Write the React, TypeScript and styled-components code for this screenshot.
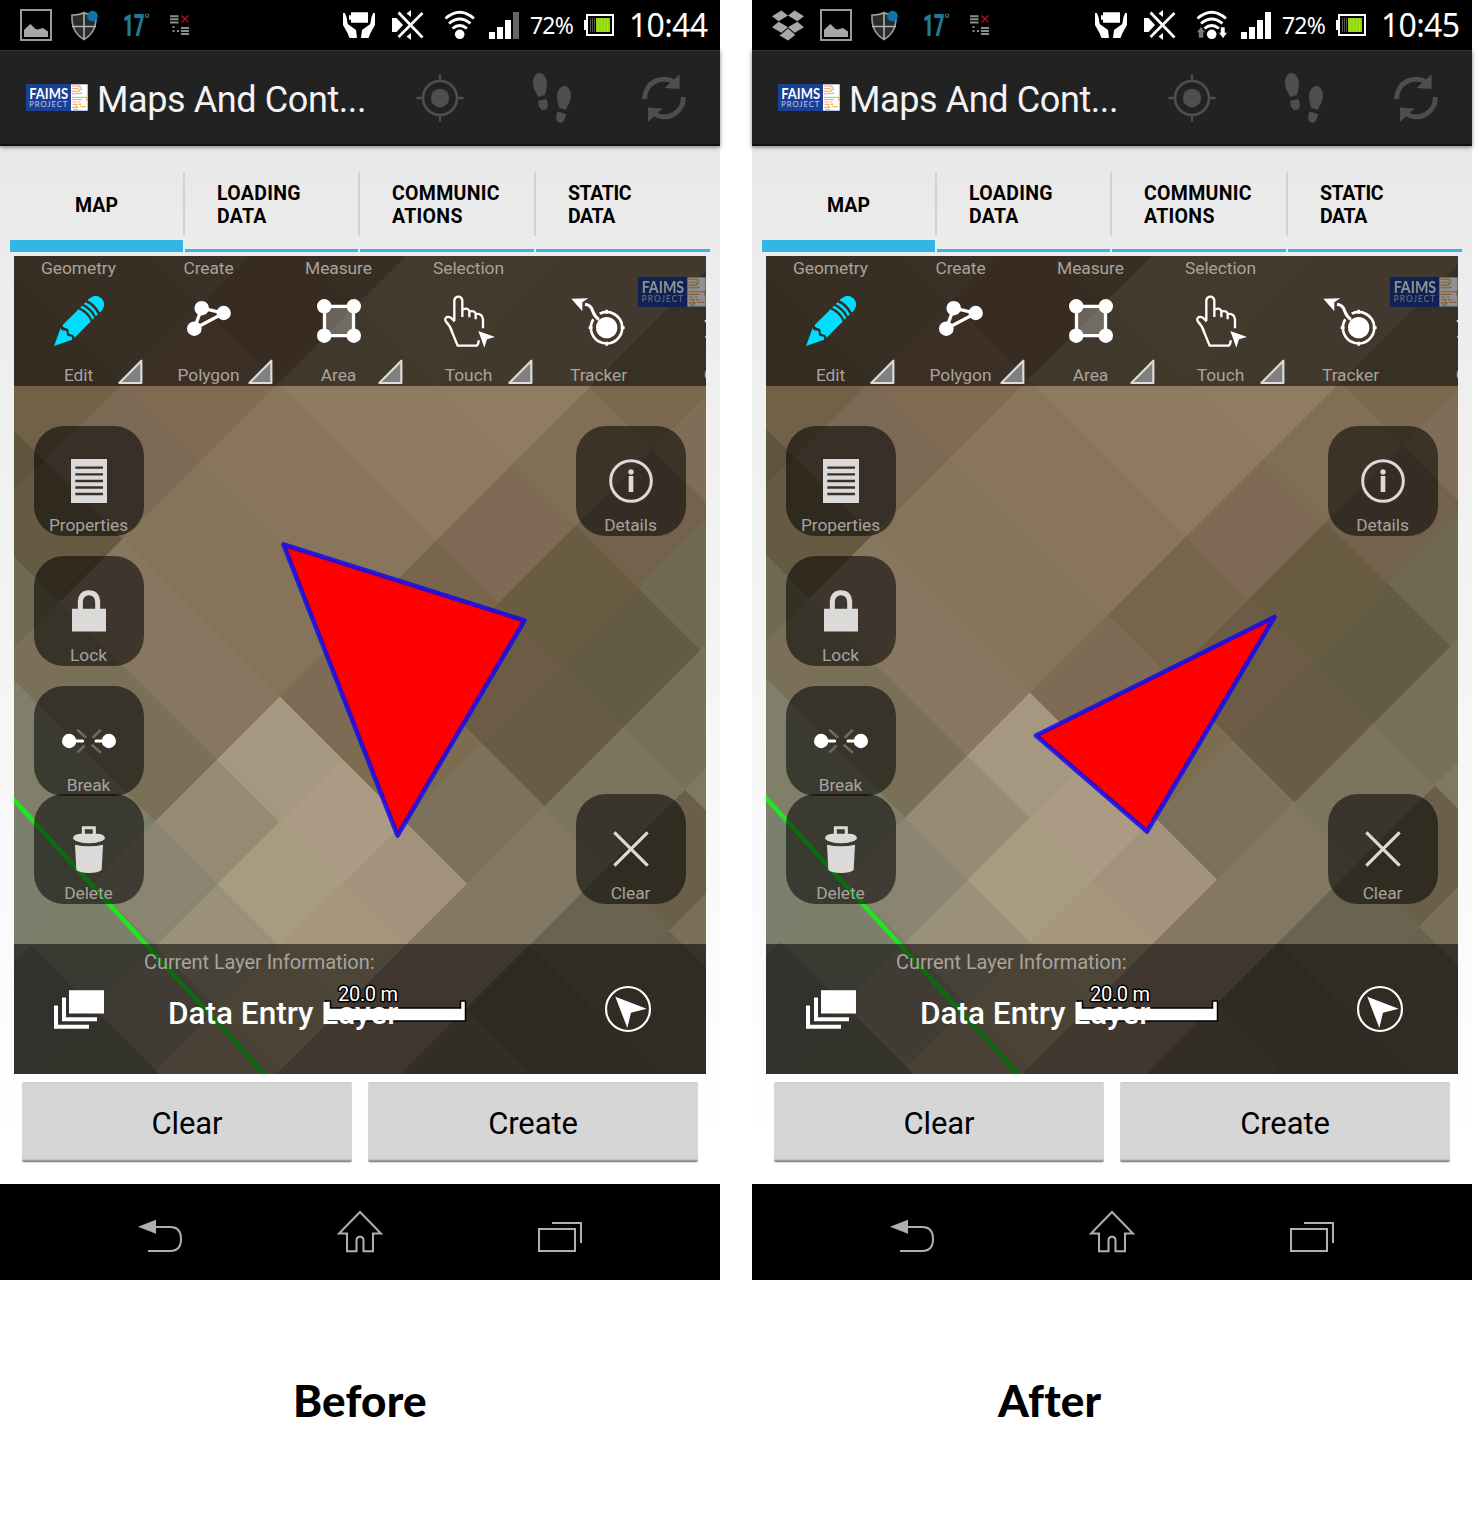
import React from "react";
import styled, { createGlobalStyle } from "styled-components";

const Global = createGlobalStyle`
  * { box-sizing: border-box; }
  body { margin: 0; background: #fff; font-family: Roboto, "Liberation Sans", sans-serif; }
`;

const Page = styled.main`
  width: 1480px;
  height: 1528px;
  display: flex;
  gap: 32px;
  overflow: hidden;
`;
const Column = styled.section`
  width: 720px;
  display: flex;
  flex-direction: column;
`;
const Caption = styled.h2<{ $left: number }>`
  margin: 90px 0 0;
  padding-left: ${(p) => p.$left}px;
  font: 900 44px/60px Lato, "Open Sans", sans-serif;
  letter-spacing: 0.2px;
  color: #000;
  white-space: nowrap;
`;
const Screen = styled.div`
  height: 1280px;
  display: flex;
  flex-direction: column;
  background: linear-gradient(#e8e8e8 146px, #ececec 260px, #ffffff 1140px);
`;
const Glyph = styled.svg`
  display: block;
  flex: none;
  overflow: visible;
`;

/* ---------- status bar ---------- */
const StatusBar = styled.header`
  height: 50px;
  background: #000;
  display: flex;
  justify-content: space-between;
  align-items: center;
  padding: 0 11px 0 12px;
`;
const Notices = styled.div`
  display: flex;
`;
const NoticeSlot = styled.div`
  width: 48px;
  height: 50px;
  display: flex;
  align-items: center;
  justify-content: center;
`;
const Indicators = styled.div`
  display: grid;
  grid-template-columns: 49px 52px 45px 41px 54px 45px 80px;
  align-items: center;
  height: 50px;
  color: #fff;
  font-family: "Noto Sans", sans-serif;
`;
const Percent = styled.span`
  font-size: 23px;
  line-height: 50px;
  letter-spacing: -0.8px;
`;
const Clock = styled.span`
  font-size: 32px;
  line-height: 50px;
  letter-spacing: -0.7px;
  white-space: nowrap;
`;

/* ---------- action bar ---------- */
const ActionBar = styled.div`
  height: 96px;
  background: #222;
  border-top: 1px solid #333;
  border-bottom: 2px solid #151214;
  box-shadow: 0 1px 4px rgba(0, 0, 0, 0.5);
  display: flex;
  align-items: center;
  padding-left: 26px;
`;
const Title = styled.h1`
  margin: 0 0 0 9px;
  padding-top: 5px;
  width: 287px;
  font-size: 36px;
  line-height: 48px;
  font-weight: 400;
  letter-spacing: -0.4px;
  color: #f3f3f3;
  white-space: nowrap;
`;
const ActionSlot = styled.div`
  width: 112px;
  display: flex;
  justify-content: center;
  color: #4e4e4e;
`;

/* ---------- tabs ---------- */
const Tabs = styled.nav`
  height: 106px;
  margin: 0 10px;
  padding-top: 10px;
  display: grid;
  grid-template-columns: 173px 2px 173px 2px 174px 2px 174px;
`;
const TabDivider = styled.i`
  width: 2px;
  height: 64px;
  margin-top: 16px;
  background: #d2d2d2;
`;
const Tab = styled.div<{ $active?: boolean; $track?: number }>`
  padding: 0 32px;
  display: flex;
  align-items: center;
  justify-content: ${(p) => (p.$active ? "center" : "flex-start")};
  border-bottom: ${(p) => (p.$active ? 12 : 3)}px solid #33b5e5;
  padding-top: ${(p) => (p.$active ? 15 : 5)}px;
  font-size: 19.5px;
  line-height: 23px;
  font-weight: 700;
  letter-spacing: ${(p) => p.$track || 0}px;
  white-space: nowrap;
  color: #000;
`;

/* ---------- map ---------- */
const MapBox = styled.div`
  position: relative;
  width: 692px;
  height: 818px;
  margin: 4px 14px 0;
  overflow: hidden;
`;
const Terrain = styled.svg`
  position: absolute;
  inset: 0;
`;
const Overlay = styled.div`
  position: absolute;
  inset: 0;
  display: flex;
  flex-direction: column;
`;
const Toolbar = styled.div`
  height: 130px;
  background: rgba(0, 0, 0, 0.54);
  display: flex;
`;
const Tool = styled.div`
  position: relative;
  flex: none;
  width: 130px;
  display: flex;
  flex-direction: column;
  align-items: center;
  justify-content: space-between;
  padding: 2px 0 1px;
`;
const ToolIcon = styled.div`
  margin-top: -2px;
`;
const ToolLabel = styled.span`
  height: 20px;
  margin-right: 1px;
  font-size: 17.4px;
  line-height: 20px;
  letter-spacing: -0.08px;
  color: #a8a39d;
`;
const CornerMark = styled(Glyph)`
  position: absolute;
  right: 0;
  bottom: 0;
`;
const Watermark = styled.div`
  position: absolute;
  left: 624px;
  top: 21px;
  filter: brightness(0.56);
`;
const SideArea = styled.div`
  height: 558px;
  padding: 40px 20px;
  display: flex;
  justify-content: space-between;
`;
const SideColumn = styled.div<{ $spread?: boolean }>`
  display: flex;
  flex-direction: column;
  gap: ${(p) => (p.$spread ? 0 : 20)}px;
  justify-content: ${(p) => (p.$spread ? "space-between" : "flex-start")};
`;
const SideButton = styled.div<{ $pull?: number }>`
  width: 110px;
  height: 110px;
  flex: none;
  margin-top: ${(p) => p.$pull || 0}px;
  border-radius: 30px;
  background: rgba(0, 0, 0, 0.54);
  display: flex;
  flex-direction: column;
  align-items: center;
  justify-content: flex-end;
`;
const SideIcon = styled.div`
  flex: 1;
  display: flex;
  align-items: center;
  padding-top: 21px;
`;
const SideLabel = styled(ToolLabel)`
  height: 21px;
`;
const LayerBar = styled.div`
  position: relative;
  height: 130px;
  background: rgba(0, 0, 0, 0.54);
  display: flex;
  align-items: center;
  padding: 0 55px 0 40px;
`;
const LayerText = styled.div`
  position: relative;
  z-index: 1;
  flex: 1;
  align-self: flex-start;
  padding: 6px 0 0 40px;
  white-space: nowrap;
`;
const LayerHint = styled.div`
  font-size: 20px;
  line-height: 24px;
  letter-spacing: -0.08px;
  color: #a8a39d;
`;
const LayerName = styled.div`
  margin: 21px 0 0 24px;
  font-size: 31.5px;
  line-height: 38px;
  font-weight: 500;
  letter-spacing: 0;
  color: #fff;
`;
const ScaleBar = styled.svg`
  position: absolute;
  left: 310px;
  top: 36px;
  overflow: visible;
`;

/* ---------- bottom ---------- */
const Buttons = styled.div`
  height: 110px;
  margin: 0 14px;
  padding: 8px 8px 22px;
  background: #fff;
  display: flex;
  gap: 16px;
`;
const Button = styled.button`
  flex: 1;
  border: 0;
  border-radius: 2px;
  background: linear-gradient(#cccccc 0, #d6d6d6 3px, #d6d6d6 77px, #b4b4b4 78px, #8a8a8a 79px);
  box-shadow: 0 1px 1px rgba(0, 0, 0, 0.15);
  font: 400 31px/36px Roboto, sans-serif;
  letter-spacing: -0.1px;
  color: #000;
  padding: 3px 0 0;
`;
const NavBar = styled.footer`
  height: 96px;
  background: #000;
  display: flex;
  padding: 0 60px;
`;
const NavSlot = styled.div`
  width: 200px;
  display: flex;
  align-items: center;
  justify-content: center;
`;

/* ---------- terrain mosaic ---------- */
// Diagonal bands: u = x + y and v = x - y, in screen coordinates.
const U = [200, 506, 662, 819, 977, 1102, 1227, 1351, 1475, 1600, 1800];
const V = [520, 203, 50, -105, -262, -417, -543, -667, -791, -915, -1080];
const tones: string[][] = [
  ["#7d6a53", "#7d6a53", "#7d6a53", "#7a6850", "#706147", "#5f543d", "#5f543d", "#5f543d", "#5f543d", "#5f543d"],
  ["#8a765d", "#7a644d", "#7a614b", "#836a53", "#7a6a53", "#675a43", "#6f6a53", "#6f6a53", "#6f6a53", "#6f6a53"],
  ["#927c62", "#927c62", "#8e7a60", "#88755c", "#85745a", "#877660", "#7a7058", "#7f7f6a", "#7f7f6a", "#7f7f6a"],
  ["#907b62", "#907c62", "#8e7a61", "#89755c", "#85735a", "#887661", "#7a7058", "#7f7f6a", "#7b806c", "#7b806c"],
  ["#7b694f", "#806f55", "#7f6a55", "#77664c", "#7d6b55", "#a69780", "#978b74", "#8a8570", "#7d7f6b", "#6a7062"],
  ["#806d57", "#73624c", "#6a5b43", "#6c5b45", "#7d6d50", "#ab9b84", "#a89c80", "#9b9079", "#8c8472", "#706f5e"],
  ["#706953", "#706953", "#635b42", "#675c44", "#7c715a", "#a3937d", "#a6967a", "#a49377", "#a08c76", "#706f5e"],
  ["#79705b", "#79705b", "#79705b", "#7d745d", "#827762", "#877864", "#8b7763", "#8d7866", "#8d7866", "#706f5e"],
  ["#817861", "#817861", "#817861", "#6a6049", "#696350", "#655c4b", "#6e6553", "#6e6553", "#6e6553", "#6e6553"],
  ["#7a705a", "#7a705a", "#7a705a", "#7a705a", "#696150", "#655a4b", "#655a4b", "#655a4b", "#655a4b", "#655a4b"],
];

function corner(u: number, v: number) {
  return `${(u + v) / 2},${(u - v) / 2}`;
}

function TerrainMap({ shape, shift }: { shape: string; shift: [number, number] }) {
  return (
    <Terrain width="692" height="818" viewBox="14 256 692 818">
      <g transform={`translate(${shift[0]} ${shift[1]})`}>
        {tones.map((row, i) =>
          row.map((tone, j) => (
            <polygon
              key={`${i}-${j}`}
              fill={tone}
              stroke={tone}
              strokeWidth="0.8"
              points={[corner(U[i], V[j]), corner(U[i + 1], V[j]), corner(U[i + 1], V[j + 1]), corner(U[i], V[j + 1])].join(" ")}
            />
          ))
        )}
        <path d="M0 784.700L290 1102" stroke="#1fe61f" strokeWidth="4.600" />
      </g>
      <polygon points={shape} fill="#f00" />
      <polygon points={shape} fill="none" stroke="#0a0af5" strokeOpacity="0.820" strokeWidth="4.600" strokeLinejoin="round" />
    </Terrain>
  );
}

/* ---------- pieces ---------- */
function Logo({ w, h }: { w: number; h: number }) {
  return (
    <Glyph width={w} height={h} viewBox="0 0 186 81" preserveAspectRatio="none">
      <rect width="186" height="81" fill="#1b3f94" />
      <rect x="135" y="1" width="50" height="79" fill="#fff" />
      <text x="10" y="44" fontFamily="Lato, sans-serif" fontWeight="700" fontSize="46" fill="#fff" textLength="116" lengthAdjust="spacingAndGlyphs">FAIMS</text>
      <text x="10" y="68" fontFamily="Lato, sans-serif" fontSize="23" fill="#c3cfea" textLength="114" lengthAdjust="spacing">PROJECT</text>
      <g stroke="#f3a54a" strokeWidth="3" fill="none">
        <path d="M138 6h24v6h6M138 14h20M138 22h22v-5h8M138 29h28v-4M138 40h44v10M138 47h30M140 54h10M155 54h8M140 61h12v8M157 61h10M138 70h20M162 68h18M142 76h14" />
      </g>
    </Glyph>
  );
}

const Gallery = () => (
  <Glyph width="32" height="32" viewBox="20 9 32 32">
    <rect x="21" y="10" width="30" height="30" fill="none" stroke="#9a9a9a" strokeWidth="2" />
    <path d="M24 37v-7l3-3 3.500-3 5 5 2 .5 5.500-1.500 5 3.500v5.500z" fill="#a8a8a8" />
  </Glyph>
);
const Shield = () => (
  <Glyph width="28" height="31" viewBox="70 9 28 31">
    <path d="M72 14q8 0 12-2.500 4 2.500 12 2.500 1 17-12 24.500Q71 31 72 14z" fill="#2b2b2b" stroke="#9a9a9a" strokeWidth="1.600" />
    <path d="M84 12v26M72 25.500h24" stroke="#b0b0b0" strokeWidth="1.600" />
    <circle cx="92.500" cy="15" r="5.300" fill="#0b75a8" />
  </Glyph>
);
const Degrees = () => (
  <Glyph width="26" height="24" viewBox="119 14 26 24">
    <text x="123" y="37" fontFamily="Roboto, sans-serif" fontWeight="900" fontSize="31" fill="#23799b" textLength="21.500" lengthAdjust="spacingAndGlyphs">17</text>
    <circle cx="147" cy="16.700" r="1.700" fill="none" stroke="#23799b" strokeWidth="1.200" />
  </Glyph>
);
const ListNotice = () => (
  <Glyph width="20" height="21" viewBox="170 14 20 21">
    <path d="M170 15.200h8.500M170 18.300h8.500M170 21.500h8.500M181 27h8M181 30h8M181 33h8" stroke="#8d8d8d" strokeWidth="1.900" />
    <path d="M172.500 26h2M172.500 30h2M177 30h2" stroke="#8d8d8d" strokeWidth="2" />
    <path d="M181.500 14.500l7 7M188.500 14.500l-7 7" stroke="#b3141c" strokeWidth="1.300" />
  </Glyph>
);
const Dropbox = () => (
  <Glyph width="32" height="31" viewBox="0 0 96 92">
    <path d="M28 1l20 15-28 17L0 18zM68 1L48 16l28 17 20-15zM20 35L0 51l28 17 20-17zM76 35l20 16-28 17-20-17zM28 72l20-17 20 17v4L48 91 22 75z" fill="#a8a8a8" />
  </Glyph>
);
const Hands = () => (
  <Glyph width="32" height="26" viewBox="343 12 32 26">
    <path d="M351 12.300h17v10.500h-17v-3h-2v-4.500h2z" fill="#fff" />
    <path d="M343 13h1.800l1.700 4 1.200 7 8.300 6 1 8h-7.500l-2-5-4.500-8zM375 13h-1.800l-1.700 4-1.200 7-8.300 6-1 8h7.500l2-5 4.500-8z" fill="#fff" />
  </Glyph>
);
const Mute = () => (
  <Glyph width="32" height="30" viewBox="392 10 32 30">
    <path d="M392 18h4.500l6.500 7-6.500 7H392zM406.500 13.500l4.500-3.500v7zM406.500 36.500l4.500 3.500v-7z" fill="#fff" />
    <path d="M398.500 12.500l24 25M422.500 13l-24 24" stroke="#fff" strokeWidth="2.700" />
  </Glyph>
);
const Wifi = ({ busy }: { busy?: boolean }) => (
  <Glyph width="31" height="30" viewBox="444 10 31 30">
    <circle cx="459.700" cy="34.300" r="4.800" fill="#fff" />
    <g fill="none" stroke="#fff" strokeWidth="2.900">
      <path d="M445.500 18.500q14.200-12.500 28.400 0" />
      <path d="M449 23.500q10.700-9 21.400 0" />
      <path d="M452.500 28.500q7.200-6 14.400 0" />
    </g>
    {busy && (
      <g>
        <path d="M449 26.500l4.500 6h-2v5.500h-5v-5.500h-2z" fill="#777" stroke="#000" strokeWidth=".6" />
        <path d="M471 38.500l4.500-6H473v-5.500h-4.500v5.500h-2z" fill="#fff" stroke="#000" strokeWidth=".6" />
      </g>
    )}
  </Glyph>
);
const Signal = ({ full }: { full?: boolean }) => (
  <Glyph width="30" height="27" viewBox="489 12 30 27">
    <path d="M489 32h6v7h-6zM497 27h6v12h-6zM505 20h6v19h-6z" fill="#fff" />
    <path d="M513 12h6v27h-6z" fill={full ? "#fff" : "#666"} />
  </Glyph>
);
const Battery = () => (
  <Glyph width="30" height="22" viewBox="584 15 30 22">
    <path d="M587 16h26v20h-26zM585 21v10" fill="none" stroke="#fff" strokeWidth="2" />
    <path d="M590.500 19v14M592.500 19v14M594.500 19v14" stroke="#555" strokeWidth="1" />
    <path d="M596 19h14v14h-14z" fill="#93d60e" />
    <path d="M598.500 19v14M601.500 19v14M604.500 19v14M607.500 19v14" stroke="#a6e02c" strokeWidth="1" />
  </Glyph>
);

const Target = () => (
  <Glyph width="48" height="48" viewBox="416 74 48 48" fill="none" stroke="currentColor">
    <circle cx="440" cy="98" r="17" strokeWidth="2.600" />
    <circle cx="440" cy="98" r="9.200" fill="currentColor" stroke="none" />
    <path d="M440 74.500V82M440 114v7.500M416.500 98H424M456 98h7.500" strokeWidth="2.300" />
  </Glyph>
);
const Steps = () => (
  <Glyph width="40" height="52" viewBox="532 72 40 52" fill="currentColor">
    <path d="M539 73c5-.5 8 5 8 11.500 0 4-1.500 7-2 10.500l-7 2c-.8-3-5-8-5-14 0-5 2.500-9.700 6-10zM538 101l8.500-2c.8 3 1.500 5 1.300 7-.5 5-5.800 5.500-7.800 2-1-2-1.800-4-2-7zM565 86c-5-.5-8 5-8 11.500 0 4 1.500 7 2 10.500l7 2c.8-3 5-8 5-14 0-5-2.500-9.700-6-10zM566 114l-8.500-2.500c-1 3-1.500 5-1.300 7 .5 5 5.800 5.500 7.800 2 1-2 1.800-3.500 2-6.500z" />
  </Glyph>
);
const Refresh = () => (
  <Glyph width="48" height="50" viewBox="640 73 48 50">
    <path d="M644.700 99a19.200 19.200 0 0 1 30-16.500M683.400 97a19.200 19.200 0 0 1-30 16.500" fill="none" stroke="currentColor" strokeWidth="5" />
    <path d="M679.500 74.500v14.500l-15-1zM648 122V107.500l14.500 1z" fill="currentColor" />
  </Glyph>
);

const Pencil = () => (
  <Glyph width="50" height="50" viewBox="54 296 50 50">
    <g transform="translate(54 346) rotate(-45) scale(.3333)" fill="#00ddff">
      <path d="M0 0L54-25q-7 8 0 13 7 6 0 12-7 7 0 13 6 5-2 12z" />
      <path d="M62-26H130Q140 0 130 26H60q8-7 1-14-6-6 1-12 7-7 0-13-5-6 0-13z" />
      <path d="M137-26h8q9 26 0 52h-8q9-26 0-52zM152-26h8q9 26 0 52h-8q9-26 0-52z" />
      <path d="M168-26h8q26 3 26 26t-26 26h-8q9-26 0-52z" />
    </g>
  </Glyph>
);
const PolygonIcon = () => (
  <Glyph width="46" height="50" viewBox="186 296 46 50">
    <path d="M201.700 308.200l22 5-29.400 15.500z" fill="none" stroke="#fff" strokeWidth="3.300" />
    <g fill="#fff"><circle cx="201.700" cy="308.200" r="7.300" /><circle cx="223.700" cy="313" r="7.200" /><circle cx="194.300" cy="328.700" r="7.300" /></g>
  </Glyph>
);
const AreaIcon = () => (
  <Glyph width="46" height="50" viewBox="316 296 46 50">
    <path d="M324.500 306.300h29v29.300h-29z" fill="#fff" fillOpacity=".26" stroke="#fff" strokeWidth="3.300" />
    <g fill="#fff"><circle cx="324.200" cy="306.300" r="7.200" /><circle cx="353.800" cy="306.300" r="7.200" /><circle cx="324.200" cy="335.700" r="7.200" /><circle cx="353.800" cy="335.700" r="7.200" /></g>
  </Glyph>
);
const Touch = () => (
  <Glyph width="52" height="52" viewBox="252 450 156 156">
    <path d="M286 528v-62q2-11 12-11t12 11v50M312 493q16-6 19 6v18M332 499q16-3 18 8v16M351 506q20 0 21 18v26M286 530q-10-16-22-14-9 5-3 14 14 14 19 33l16 39h57q6-4 6-16" fill="none" stroke="#fff" strokeWidth="7" />
    <path d="M358 558l50 18-24 7-8 25z" fill="#fff" />
  </Glyph>
);
const Tracker = () => (
  <Glyph width="54" height="52" viewBox="637 450 162 156">
    <path d="M635 461l51-1-18 12v27z" fill="#fff" />
    <path d="M676 478q18 2 22 18 6 18 20 28" fill="none" stroke="#fff" strokeWidth="9" />
    <circle cx="741" cy="548" r="32" fill="#fff" />
    <path d="M720 506a47 47 0 1 1-19 17M741 494v12M741 590v12M687 548h12M783 548h12" fill="none" stroke="#fff" strokeWidth="8" />
  </Glyph>
);
const NextTool = () => (
  <Glyph width="60" height="50" viewBox="697 296 60 50">
    <path d="M706 304l-2 1.500 2 1M706 319l-2.500 2 2.500 2M706 335l-2 2 2 1.500" stroke="#ddd" fill="none" strokeWidth="1.600" />
    <path d="M705 370q-3 4.500 0 9" stroke="#a8a39d" fill="none" strokeWidth="1.800" />
  </Glyph>
);

const tools: { top: string; label: string; icon: React.ReactNode; more: boolean }[] = [
  { top: "Geometry", label: "Edit", icon: <Pencil />, more: true },
  { top: "Create", label: "Polygon", icon: <PolygonIcon />, more: true },
  { top: "Measure", label: "Area", icon: <AreaIcon />, more: true },
  { top: "Selection", label: "Touch", icon: <Touch />, more: true },
  { top: "", label: "Tracker", icon: <Tracker />, more: false },
  { top: "", label: "", icon: <NextTool />, more: false },
];

const light = "#dbdad8";
const PropertiesIcon = () => (
  <Glyph width="36" height="44" viewBox="213 219 108 132">
    <path d="M213 219h108v132H213z" fill={light} />
    <path d="M226 245h83M226 265h83M226 285h83M226 304.500h83M226 324h83" stroke="#3a3028" strokeWidth="7" />
  </Glyph>
);
const LockIcon = () => (
  <Glyph width="34" height="42" viewBox="216 613 102 125">
    <path d="M216 669h102v68H216z" fill={light} />
    <path d="M241 672v-24q2-27 26-27t26 27v24" fill="none" stroke={light} strokeWidth="15" />
  </Glyph>
);
const BreakIcon = () => (
  <Glyph width="54" height="26" viewBox="186 144 162 78">
    <path d="M232 149l26 24M303 149l-25 24M232 218l22-22M303 218l-28-24" stroke="#6b6a62" strokeWidth="8" />
    <path d="M207 183h41M288 183h39" stroke="#fff" strokeWidth="9" strokeLinecap="round" />
    <circle cx="207.500" cy="183" r="21.500" fill="#fff" />
    <circle cx="326.500" cy="183" r="21.500" fill="#fff" />
  </Glyph>
);
const TrashIcon = () => (
  <Glyph width="32" height="47" viewBox="219 436 96 141">
    <path d="M250 464v-23h33v23" fill="none" stroke={light} strokeWidth="9" />
    <path d="M219 474q0-14 22-15h52q22 1 22 15-12 13-48 14-36-1-48-14zM225 492q42 9 84 0l-4 76q-10 9-38 9t-38-9z" fill={light} />
  </Glyph>
);
const InfoIcon = () => (
  <Glyph width="44" height="44" viewBox="747 219 132 132">
    <circle cx="813" cy="285" r="61" fill="none" stroke={light} strokeWidth="9" />
    <circle cx="813" cy="258" r="8" fill={light} />
    <path d="M813 270v48" stroke={light} strokeWidth="14" />
  </Glyph>
);
const ClearIcon = () => (
  <Glyph width="36" height="36" viewBox="759 453 108 108">
    <path d="M763 457l100 100M863 457L763 557" stroke={light} strokeWidth="9.500" />
  </Glyph>
);
const LayersIcon = () => (
  <Glyph width="50" height="39" viewBox="162 929 150 116">
    <path d="M207 929h105v70H207zM186 951h12v59h93v12H186zM162 975h12v58h93v12H162z" fill="#fff" />
  </Glyph>
);
const Compass = () => (
  <Glyph width="46" height="46" viewBox="734 918 138 138">
    <circle cx="803" cy="987" r="66" fill="none" stroke="#fff" strokeWidth="6.500" />
    <path d="M765 950l94 36-47 12-11 46z" fill="#fff" />
  </Glyph>
);

function Phone({ time, shape, shift, synced }: { time: string; shape: string; shift: [number, number]; synced?: boolean }) {
  return (
    <Screen>
      <StatusBar>
        <Notices>
          {synced && <NoticeSlot><Dropbox /></NoticeSlot>}
          <NoticeSlot><Gallery /></NoticeSlot>
          <NoticeSlot><Shield /></NoticeSlot>
          <NoticeSlot><Degrees /></NoticeSlot>
          <NoticeSlot><ListNotice /></NoticeSlot>
        </Notices>
        <Indicators>
          <Hands />
          <Mute />
          <Wifi busy={synced} />
          <Signal full={synced} />
          <Percent>72%</Percent>
          <Battery />
          <Clock>{time}</Clock>
        </Indicators>
      </StatusBar>
      <ActionBar>
        <Logo w={62} h={27} />
        <Title>Maps And Cont...</Title>
        <ActionSlot><Target /></ActionSlot>
        <ActionSlot><Steps /></ActionSlot>
        <ActionSlot><Refresh /></ActionSlot>
      </ActionBar>
      <Tabs>
        <Tab $active>MAP</Tab>
        <TabDivider />
        <Tab $track={0.3}>LOADING<br />DATA</Tab>
        <TabDivider />
        <Tab $track={0.3}>COMMUNIC<br />ATIONS</Tab>
        <TabDivider />
        <Tab $track={-0.4}>STATIC<br />DATA</Tab>
      </Tabs>
      <MapBox>
        <TerrainMap shape={shape} shift={shift} />
        <Overlay>
          <Toolbar>
            {tools.map((t, i) => (
              <Tool key={i}>
                <ToolLabel>{t.top}</ToolLabel>
                <ToolIcon>{t.icon}</ToolIcon>
                <ToolLabel>{t.label}</ToolLabel>
                {t.more && (
                  <CornerMark width="27" height="27" viewBox="351 642 81 81">
                    <path d="M358 714l66-67v67z" fill="#808080" stroke="#dedcda" strokeWidth="6.500" strokeLinejoin="round" />
                  </CornerMark>
                )}
              </Tool>
            ))}
          </Toolbar>
          <SideArea>
            <SideColumn>
              <SideButton><SideIcon><PropertiesIcon /></SideIcon><SideLabel>Properties</SideLabel></SideButton>
              <SideButton><SideIcon><LockIcon /></SideIcon><SideLabel>Lock</SideLabel></SideButton>
              <SideButton><SideIcon><BreakIcon /></SideIcon><SideLabel>Break</SideLabel></SideButton>
              <SideButton $pull={-22}><SideIcon><TrashIcon /></SideIcon><SideLabel>Delete</SideLabel></SideButton>
            </SideColumn>
            <SideColumn $spread>
              <SideButton><SideIcon><InfoIcon /></SideIcon><SideLabel>Details</SideLabel></SideButton>
              <SideButton><SideIcon><ClearIcon /></SideIcon><SideLabel>Clear</SideLabel></SideButton>
            </SideColumn>
          </SideArea>
          <LayerBar>
            <LayersIcon />
            <LayerText>
              <LayerHint>Current Layer Information:</LayerHint>
              <LayerName>Data Entry Layer</LayerName>
            </LayerText>
            <Compass />
            <ScaleBar width="144" height="46" viewBox="324 980 144 46">
              <path d="M325.500 1001h5v7h130v-7h5v20h-140z" fill="#fff" stroke="#000" strokeWidth="1.500" />
              <text x="338" y="1001" fontFamily="Roboto, sans-serif" fontSize="20" fill="#fff" stroke="#000" strokeWidth="3" strokeLinejoin="round" paintOrder="stroke" textLength="60">20.0 m</text>
            </ScaleBar>
          </LayerBar>
          <Watermark><Logo w={68} h={30} /></Watermark>
        </Overlay>
      </MapBox>
      <Buttons>
        <Button>Clear</Button>
        <Button>Create</Button>
      </Buttons>
      <NavBar>
        <NavSlot>
          <Glyph width="46" height="34" viewBox="137 1215 46 34">
            <path d="M138 1226.700l18-7v14z" fill="#b0b0b0" />
            <path d="M155 1227h15q11 0 11 12t-11 12h-22" fill="none" stroke="#b0b0b0" strokeWidth="2" />
          </Glyph>
        </NavSlot>
        <NavSlot>
          <Glyph width="46" height="42" viewBox="337 1211 46 42">
            <path d="M360 1212l21 21.500h-8v17.700h-9.500v-11q0-3.500-3.500-3.500t-3.500 3.500v11H347v-17.700h-8z" fill="none" stroke="#b0b0b0" strokeWidth="2" />
          </Glyph>
        </NavSlot>
        <NavSlot>
          <Glyph width="44" height="32" viewBox="538 1216 44 32">
            <path d="M539 1229h36v22h-36zM552 1223h29v20" fill="none" stroke="#b0b0b0" strokeWidth="2" />
          </Glyph>
        </NavSlot>
      </NavBar>
    </Screen>
  );
}

export default function App() {
  return (
    <Page>
      <Global />
      <Column>
        <Phone time="10:44" shape="283.500,544.500 524.500,620.500 397.500,835.500" shift={[0, 0]} />
        <Caption $left={293}>Before</Caption>
      </Column>
      <Column>
        <Phone time="10:45" shape="284,735.500 522.500,617 395,831.500" shift={[-2, -4]} synced />
        <Caption $left={246}>After</Caption>
      </Column>
    </Page>
  );
}
